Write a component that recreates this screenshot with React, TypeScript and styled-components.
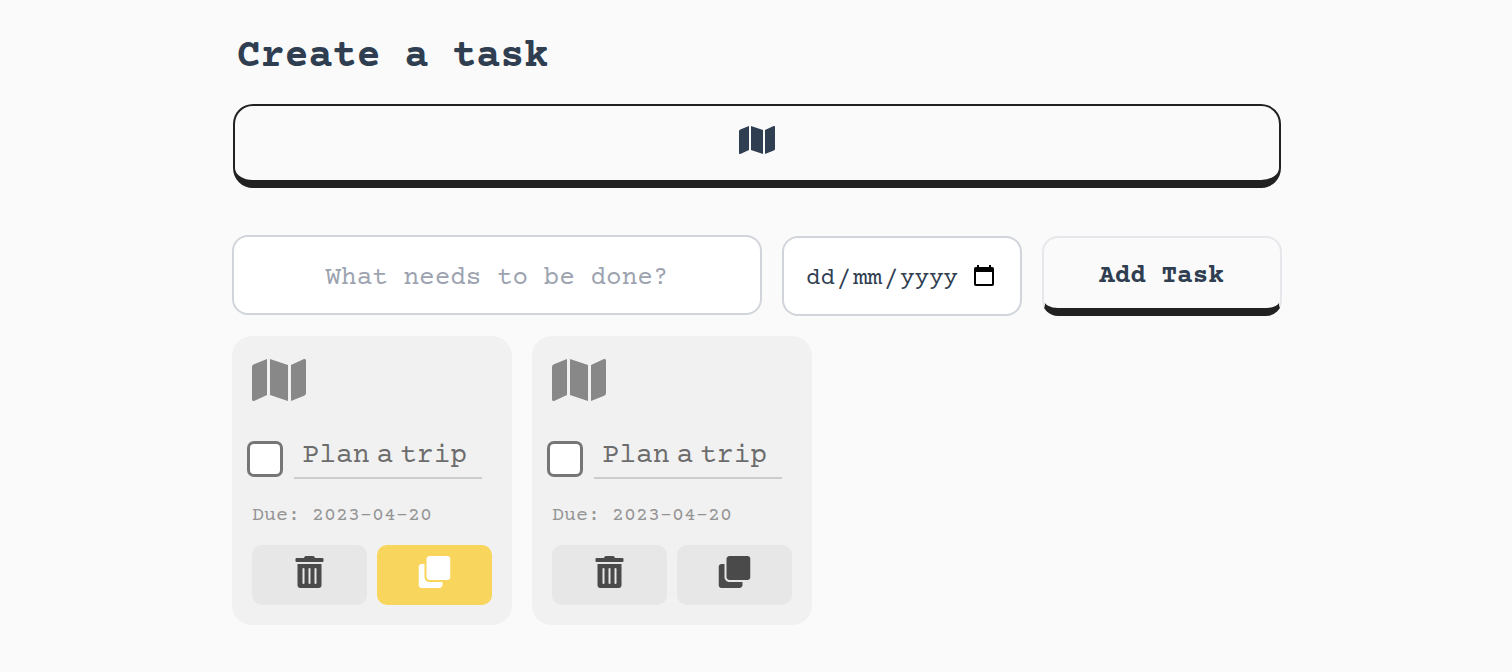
import React from 'react';
import styled, { createGlobalStyle } from 'styled-components';
import { FaMap, FaTrashAlt, FaClone } from 'react-icons/fa';

const mono = `'Courier Prime', 'Courier New', 'Liberation Mono', monospace`;

const GlobalStyle = createGlobalStyle`
  *, *::before, *::after { box-sizing: border-box; }
  body { margin: 0; background: #fafafa; color: #2f3e50; font-family: ${mono}; }
  svg { display: block; flex: none; }
`;

const Page = styled.main`
  width: 1050px;
  min-height: 672px;
  margin-left: 232px;
  padding-top: 28px;
`;

const Heading = styled.h1`
  margin: 0 0 16px 4.5px;
  height: 60px;
  font-size: 40px;
  line-height: 60px;
  font-weight: 700;
`;

const IconBar = styled.button`
  display: flex;
  justify-content: center;
  width: 1048px;
  height: 84px;
  margin: 0 1px;
  padding: 18px 0 0;
  border: 2px solid #212121;
  border-bottom-width: 8px;
  border-radius: 20px;
  background: #fafafa;
  color: #2f3e50;
`;

const BarIcon = styled(FaMap)`
  width: 36px;
  height: 32px;
`;

const Form = styled.div`
  display: flex;
  gap: 20px;
  margin-top: 47px;
`;

const TaskInput = styled.input`
  width: 530px;
  height: 80px;
  padding: 6px 0 0;
  border: 2px solid #d1d5db;
  border-radius: 16px;
  background: #fff;
  font: 26px ${mono};
  text-align: center;
  &::placeholder { color: #9ca3af; opacity: 1; }
`;

const DateField = styled.div`
  display: flex;
  align-items: center;
  justify-content: space-between;
  width: 240px;
  height: 80px;
  margin-top: 1px;
  padding: 0 26px 0 21px;
  border: 2px solid #d1d5db;
  border-radius: 16px;
  background: #fff;
`;

const DateText = styled.span`
  display: flex;
  gap: 1px;
  padding-top: 6px;
  font-size: 24px;
  line-height: 28px;
`;

const DatePart = styled.span`
  padding: 0 1px;
`;

const AddButton = styled.button`
  width: 240px;
  height: 80px;
  margin-top: 1px;
  padding: 7px 1px 0 0;
  border: 2px solid #e5e7eb;
  border-bottom: 8px solid #212121;
  border-radius: 16px;
  background: #fafafa;
  color: #2f3e50;
  font: 700 26px ${mono};
`;

const Cards = styled.div`
  display: flex;
  gap: 20px;
  margin-top: 20px;
`;

const Card = styled.article`
  width: 280px;
  height: 289px;
  padding: 20px;
  border-radius: 20px;
  background: #f1f1f1;
  color: #888;
`;

const CardIcon = styled(FaMap)`
  width: 54px;
  height: 48px;
`;

const TitleRow = styled.div`
  display: flex;
  align-items: flex-end;
  gap: 11px;
  height: 44px;
  margin: 31px 0 0 -5px;
`;

const Checkbox = styled.span`
  width: 36px;
  height: 36px;
  margin-bottom: 2px;
  border: 3px solid #767676;
  border-radius: 7px;
  background: #fff;
`;

const Title = styled.div`
  width: 188px;
  height: 44px;
  padding: 4px 0 0 8.5px;
  border-bottom: 2px solid #ccc;
  color: #6c6c6c;
  font-size: 28px;
  line-height: 34px;
  word-spacing: -10px;
  white-space: nowrap;
`;

const Due = styled.div`
  height: 24px;
  margin: 25px 0 17px;
  color: #949494;
  font-size: 20px;
  line-height: 24px;
`;

const Actions = styled.div`
  display: grid;
  grid-template-columns: 1fr 1fr;
  gap: 10px;
`;

const Action = styled.button<{ $active?: boolean }>`
  display: flex;
  justify-content: center;
  height: 60px;
  padding: 11px 1px 0 0;
  border: 0;
  border-radius: 10px;
  background: ${p => (p.$active ? '#f8d55c' : '#e7e7e7')};
  color: ${p => (p.$active ? '#fff' : '#4a4a4a')};

  svg { transform: translateX(0.5px); }
`;

const CalendarIcon = () => (
  <svg width="20" height="22" viewBox="0 0 20 22">
    <path fillRule="evenodd" d="M3 0h2v2h10V0h2v2h1.200a1.800 1.800 0 0 1 1.800 1.800v15.400a1.800 1.800 0 0 1-1.800 1.800H1.800A1.800 1.800 0 0 1 0 19.200V3.800A1.800 1.800 0 0 1 1.800 2H3zM2 7v12h16V7z" />
  </svg>
);

const tasks = [
  { id: 1, title: 'Plan a trip', due: '2023-04-20', copying: true },
  { id: 2, title: 'Plan a trip', due: '2023-04-20', copying: false },
];

export default function App() {
  return (
    <>
      <GlobalStyle />
      <Page>
        <Heading>Create a task</Heading>
        <IconBar aria-label="Category"><BarIcon /></IconBar>
        <Form>
          <TaskInput placeholder="What needs to be done?" />
          <DateField>
            <DateText>
              <DatePart>dd</DatePart><span>/</span><DatePart>mm</DatePart><span>/</span><DatePart>yyyy</DatePart>
            </DateText>
            <CalendarIcon />
          </DateField>
          <AddButton>Add Task</AddButton>
        </Form>
        <Cards>
          {tasks.map(task => (
            <Card key={task.id}>
              <CardIcon />
              <TitleRow>
                <Checkbox role="checkbox" aria-checked={false} />
                <Title>{task.title}</Title>
              </TitleRow>
              <Due>Due: {task.due}</Due>
              <Actions>
                <Action aria-label="Delete"><FaTrashAlt size={32} /></Action>
                <Action aria-label="Duplicate" $active={task.copying}><FaClone size={32} /></Action>
              </Actions>
            </Card>
          ))}
        </Cards>
      </Page>
    </>
  );
}
